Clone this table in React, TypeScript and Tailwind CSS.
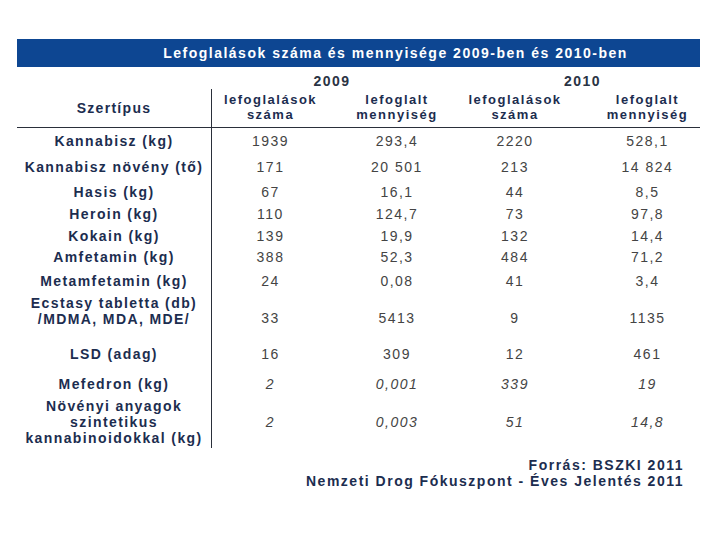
import React from "react";

type Row = {
  label: string[];
  vals: string[];
  h: string;
  lh: string;
  lshift: string;
  shift: string;
  italic?: boolean;
};

const rows: Row[] = [
  { label: ["Kannabisz (kg)"], vals: ["1939", "293,4", "2220", "528,1"], h: "h-[26px]", lh: "leading-[15px]", lshift: "", shift: "" },
  { label: ["Kannabisz növény (tő)"], vals: ["171", "20 501", "213", "14 824"], h: "h-[27px]", lh: "leading-[15px]", lshift: "", shift: "" },
  { label: ["Hasis (kg)"], vals: ["67", "16,1", "44", "8,5"], h: "h-[23px]", lh: "leading-[15px]", lshift: "", shift: "" },
  { label: ["Heroin (kg)"], vals: ["110", "124,7", "73", "97,8"], h: "h-[21px]", lh: "leading-[15px]", lshift: "", shift: "" },
  { label: ["Kokain (kg)"], vals: ["139", "19,9", "132", "14,4"], h: "h-[22px]", lh: "leading-[15px]", lshift: "", shift: "" },
  { label: ["Amfetamin (kg)"], vals: ["388", "52,3", "484", "71,2"], h: "h-[21px]", lh: "leading-[15px]", lshift: "", shift: "" },
  { label: ["Metamfetamin (kg)"], vals: ["24", "0,08", "41", "3,4"], h: "h-[26px]", lh: "leading-[15px]", lshift: "", shift: "" },
  { label: ["Ecstasy tabletta (db)", "/MDMA, MDA, MDE/"], vals: ["33", "5413", "9", "1135"], h: "h-[42px]", lh: "leading-[16px]", lshift: "pb-[8px]", shift: "pt-[7px]" },
  { label: ["LSD (adag)"], vals: ["16", "309", "12", "461"], h: "h-[36px]", lh: "leading-[15px]", lshift: "", shift: "" },
  { label: ["Mefedron (kg)"], vals: ["2", "0,001", "339", "19"], h: "h-[24px]", lh: "leading-[15px]", lshift: "", shift: "", italic: true },
  { label: ["Növényi anyagok", "szintetikus", "kannabinoidokkal (kg)"], vals: ["2", "0,003", "51", "14,8"], h: "h-[52px]", lh: "leading-[16px]", lshift: "", shift: "", italic: true },
];

const cols = "grid grid-cols-[194px_118px_136px_100px_135px]";
const font = { fontFamily: '"Liberation Sans", Arial, sans-serif' };

export default function App() {
  return (
    <div className="w-[720px] h-[540px] bg-white relative overflow-hidden" style={font}>
      <div className="pt-[39px] pl-[17px]">
        <div className="w-[683px]">
          {/* title bar */}
          <div className="h-[28px] bg-[#0d4692] flex items-center justify-center">
            <span className="text-white font-bold text-[14px] tracking-[1.5px] pl-[74px] whitespace-nowrap">
              Lefoglalások száma és mennyisége 2009-ben és 2010-ben
            </span>
          </div>
          {/* year row */}
          <div className={`${cols} h-[22px] items-center`}>
            <div />
            <div className="col-span-2 text-center font-bold text-[14px] tracking-[1.5px] text-[#2a3344] pt-[4px] pr-[12px]">2009</div>
            <div className="col-span-2 text-center font-bold text-[14px] tracking-[1.5px] text-[#2a3344] pt-[4px]">2010</div>
          </div>
          {/* header row */}
          <div className={`${cols} h-[39px] border-b border-[#2a2f3a]`}>
            <div className="flex items-center justify-center font-bold text-[14px] tracking-[1.3px] text-[#1c2d4f]">Szertípus</div>
            <div className="border-l border-[#2a2f3a] flex flex-col items-center justify-center font-bold text-[13px] tracking-[1.5px] leading-[15px] text-[#1c2d4f] pb-[2px]">
              <span>lefoglalások</span>
              <span>száma</span>
            </div>
            <div className="flex flex-col items-center justify-center font-bold text-[13px] tracking-[1.5px] leading-[15px] text-[#1c2d4f] pb-[2px]">
              <span>lefoglalt</span>
              <span>mennyiség</span>
            </div>
            <div className="flex flex-col items-center justify-center font-bold text-[13px] tracking-[1.5px] leading-[15px] text-[#1c2d4f] pb-[2px]">
              <span>lefoglalások</span>
              <span>száma</span>
            </div>
            <div className="flex flex-col items-center justify-center font-bold text-[13px] tracking-[1.5px] leading-[15px] text-[#1c2d4f] pb-[2px] pl-[30px]">
              <span>lefoglalt</span>
              <span>mennyiség</span>
            </div>
          </div>
          {/* data rows */}
          {rows.map((r, i) => (
            <div key={i} className={`${cols} ${r.h}`}>
              <div className={`flex flex-col items-center justify-center font-bold text-[14px] tracking-[1.4px] ${r.lh} ${r.lshift} text-[#1c2d4f]`}>
                {r.label.map((l, j) => (
                  <span key={j} className="whitespace-nowrap">{l}</span>
                ))}
              </div>
              {r.vals.map((v, j) => (
                <div
                  key={j}
                  className={`flex items-center justify-center text-[14px] tracking-[1.5px] text-[#444444] ${r.shift} ${r.italic ? "italic" : ""} ${j === 0 ? "border-l border-[#2a2f3a]" : ""} ${j === 3 ? "pl-[30px]" : ""}`}
                >
                  {v}
                </div>
              ))}
            </div>
          ))}
          {/* footer */}
          <div className="flex flex-col items-end pr-[16px] pt-[9px] font-bold text-[14px] tracking-[1.5px] leading-[16px] text-[#1c2d4f]">
            <span>Forrás: BSZKI 2011</span>
            <span>Nemzeti Drog Fókuszpont - Éves Jelentés 2011</span>
          </div>
        </div>
      </div>
    </div>
  );
}
